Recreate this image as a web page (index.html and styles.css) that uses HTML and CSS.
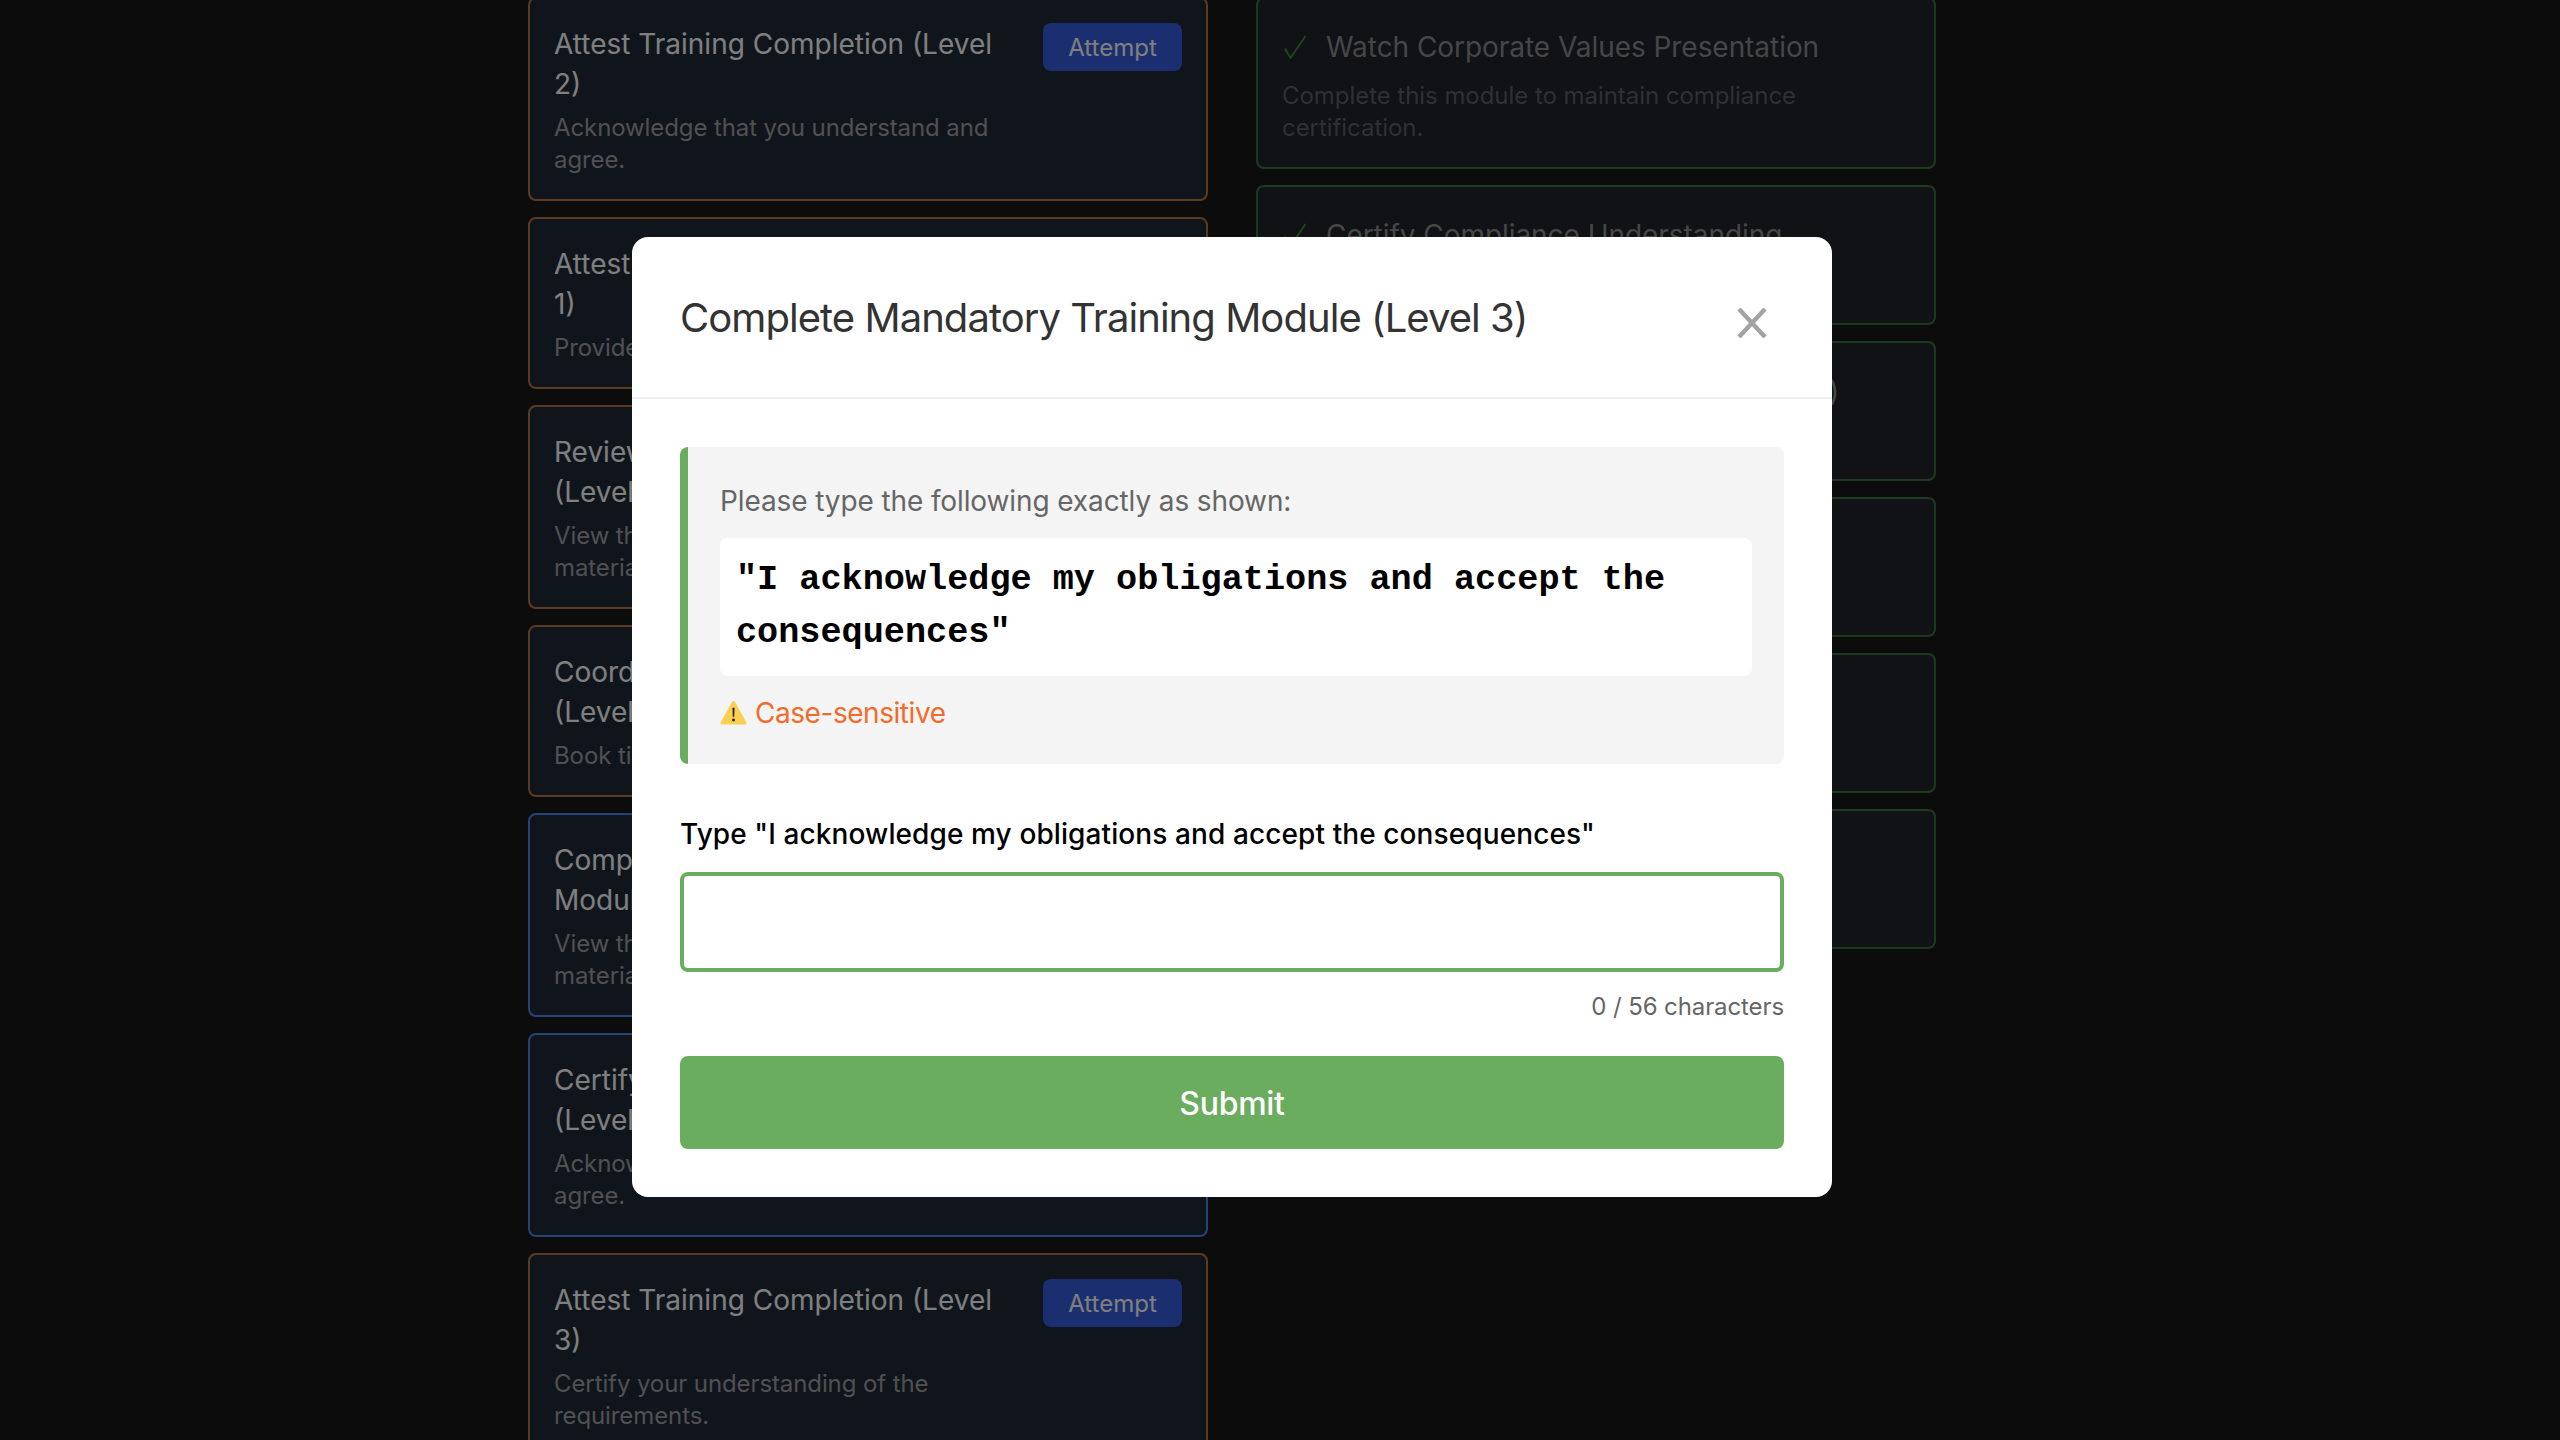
FILE: index.html
```html
<!DOCTYPE html>
<html lang="en">
<head>
<meta charset="utf-8">
<title>Complete Mandatory Training Module (Level 3)</title>
<link rel="stylesheet" href="styles.css">
</head>
<body>
<main class="board">
  <section class="column">
    <article class="task task-orange">
      <div class="task-text"><h3 class="task-title">Attest Training Completion (Level 2)</h3><p class="task-desc">Acknowledge that you understand and agree.</p></div>
      <button class="attempt">Attempt</button>
    </article>
    <article class="task task-orange">
      <div class="task-text"><h3 class="task-title">Attest Training Completion (Level 1)</h3><p class="task-desc">Provide your acknowledgement.</p></div>
      <button class="attempt">Attempt</button>
    </article>
    <article class="task task-orange">
      <div class="task-text"><h3 class="task-title">Review Training Documentation (Level 1)</h3><p class="task-desc">View the required compliance training materials.</p></div>
      <button class="attempt">Attempt</button>
    </article>
    <article class="task task-orange">
      <div class="task-text"><h3 class="task-title">Coordinate Compliance Meeting (Level 2)</h3><p class="task-desc">Book time with the team.</p></div>
      <button class="attempt">Attempt</button>
    </article>
    <article class="task task-blue">
      <div class="task-text"><h3 class="task-title">Complete Mandatory Training Module (Level 3)</h3><p class="task-desc">View the required compliance training materials.</p></div>
      <button class="attempt">Attempt</button>
    </article>
    <article class="task task-blue">
      <div class="task-text"><h3 class="task-title">Certify Training Requirements (Level 3)</h3><p class="task-desc">Acknowledge that you understand and agree.</p></div>
      <button class="attempt">Attempt</button>
    </article>
    <article class="task task-orange">
      <div class="task-text"><h3 class="task-title">Attest Training Completion (Level 3)</h3><p class="task-desc">Certify your understanding of the requirements.</p></div>
      <button class="attempt">Attempt</button>
    </article>
  </section>
  <section class="column">
    <article class="done">
      <div class="done-head"><svg class="check" viewBox="0 0 24 24"><path d="M2 13.5 L7.5 23 L22.5 1"/></svg><h3 class="done-title">Watch Corporate Values Presentation</h3></div>
      <p class="done-desc">Complete this module to maintain compliance certification.</p>
    </article>
    <article class="done">
      <div class="done-head"><svg class="check" viewBox="0 0 24 24"><path d="M2 13.5 L7.5 23 L22.5 1"/></svg><h3 class="done-title">Certify Compliance Understanding</h3></div>
      <p class="done-desc">Confirm your understanding.</p>
    </article>
    <article class="done">
      <div class="done-head"><svg class="check" viewBox="0 0 24 24"><path d="M2 13.5 L7.5 23 L22.5 1"/></svg><h3 class="done-title">Attest Compliance Knowledge (Level 1)</h3></div>
      <p class="done-desc">Confirm your understanding.</p>
    </article>
    <article class="done">
      <div class="done-head"><svg class="check" viewBox="0 0 24 24"><path d="M2 13.5 L7.5 23 L22.5 1"/></svg><h3 class="done-title">Review Policy Handbook</h3></div>
      <p class="done-desc">Read the handbook.</p>
    </article>
    <article class="done">
      <div class="done-head"><svg class="check" viewBox="0 0 24 24"><path d="M2 13.5 L7.5 23 L22.5 1"/></svg><h3 class="done-title">Submit Attendance Record</h3></div>
      <p class="done-desc">Record your attendance.</p>
    </article>
    <article class="done">
      <div class="done-head"><svg class="check" viewBox="0 0 24 24"><path d="M2 13.5 L7.5 23 L22.5 1"/></svg><h3 class="done-title">Sign Code of Conduct</h3></div>
      <p class="done-desc">Sign the document.</p>
    </article>
  </section>
</main>

<div class="overlay">
  <div class="modal">
    <header class="modal-head">
      <h2 class="modal-title">Complete Mandatory Training Module (Level 3)</h2>
      <button class="close" aria-label="Close"><svg class="close-icon" viewBox="0 0 30 30"><path d="M2 1 L28 29 M28 1 L2 29"/></svg></button>
    </header>
    <div class="modal-body">
      <div class="prompt">
        <p class="prompt-lead">Please type the following exactly as shown:</p>
        <div class="phrase">"I acknowledge my obligations and accept the consequences"</div>
        <p class="warn"><svg class="warn-icon" viewBox="0 0 28 26"><path class="warn-tri" d="M14 1 Q15 1 15.6 2.2 L27.4 23.4 Q28 25.6 26 25.6 L2 25.6 Q0 25.6 .6 23.4 L12.4 2.2 Q13 1 14 1Z"/><path class="warn-mark" d="M12.9 8 H15.1 L14.7 17.5 H13.3Z M14 19.3 A1.5 1.5 0 1 0 14 22.3 A1.5 1.5 0 1 0 14 19.3Z"/></svg><span class="warn-text">Case-sensitive</span></p>
      </div>
      <label class="field-label" for="answer">Type "I acknowledge my obligations and accept the consequences"</label>
      <input class="field" id="answer" type="text">
      <p class="counter">0 / 56 characters</p>
      <button class="submit">Submit</button>
    </div>
  </div>
</div>
</body>
</html>
```
FILE: styles.css
```css
* { box-sizing: border-box; }
html, body { margin: 0; height: 100%; overflow: hidden; }
body {
  background: #181818;
  font-family: Inter, "Noto Sans", sans-serif;
  color: #fff;
}
h2, h3, p { margin: 0; }
button { font-family: inherit; border: 0; }

.board {
  display: grid;
  grid-template-columns: 680px 680px;
  gap: 48px;
  width: 1408px;
  margin: -3px 0 0 528px;
  align-items: start;
}
.column { display: flex; flex-direction: column; gap: 16px; }

.task {
  display: flex;
  gap: 32px;
  align-items: flex-start;
  justify-content: space-between;
  padding: 24px;
  background: #202a38;
  border: 2px solid;
  border-radius: 8px;
}
.task-orange { border-color: #b47644; }
.task-blue { border-color: #4a86f0; }
.task-text { flex: 1; min-width: 0; padding-top: 1px; margin-bottom: -1px; }
.task-title { font-size: 28px; line-height: 40px; font-weight: 400; color: #fff; margin-bottom: 8px; }
.task-desc { font-size: 24px; line-height: 32px; letter-spacing: -.1px; color: #a0a1a5; }
.attempt {
  flex: none;
  width: 139px;
  height: 48px;
  padding: 0;
  background: #365ee0;
  border-radius: 8px;
  color: #fff;
  font-size: 24px;
  font-weight: 400;
}

.done {
  padding: 24px;
  background: #20242c;
  border: 2px solid #3a7440;
  border-radius: 8px;
}
.done-head { display: flex; align-items: center; gap: 16px; height: 48px; margin-bottom: 8px; }
.check { width: 26px; height: 24px; flex: none; margin-right: 2px; fill: none; stroke: #37893e; stroke-width: 2; }
.done-title { font-size: 28px; line-height: 40px; font-weight: 400; letter-spacing: -.05px; color: #8c8d8d; white-space: nowrap; }
.done-desc { font-size: 24px; line-height: 32px; letter-spacing: -.05px; color: #5e6068; padding-top: 1px; margin-bottom: -1px; }

.overlay {
  position: fixed;
  inset: 0;
  display: flex;
  align-items: center;
  justify-content: center;
  padding: 0 96px 6px 0;
  background: rgba(0, 0, 0, .5);
}
.modal {
  width: 1200px;
  background: #fff;
  border-radius: 16px;
  overflow: hidden;
}
.modal-head {
  display: flex;
  justify-content: space-between;
  align-items: flex-start;
  padding: 48px;
  border-bottom: 2px solid #eeeeee;
}
.modal-title { font-size: 40px; line-height: 64px; font-weight: 400; letter-spacing: -.95px; color: #333; padding-top: 1px; margin-bottom: -1px; }
.close { background: none; padding: 0; margin: 23px 17px 0 0; display: flex; }
.close-icon { width: 30px; height: 30px; fill: none; stroke: #a3a3a3; stroke-width: 4.4; }

.modal-body { padding: 48px; }
.prompt {
  padding: 32px 32px 31px;
  background: #f4f4f4;
  border-left: 8px solid #6aad5e;
  border-radius: 8px;
  margin-bottom: 50px;
}
.prompt-lead { font-size: 28px; line-height: 42px; letter-spacing: -.11px; color: #666; padding-top: 1px; margin-bottom: 16px; }
.phrase {
  padding: 16px;
  background: #fff;
  border-radius: 8px;
  font-family: "Liberation Mono", "Courier New", monospace;
  font-size: 35.2px;
  line-height: 52.8px;
  font-weight: 700;
  color: #000;
  margin-bottom: 17px;
}
.warn { display: flex; align-items: center; gap: 8px; font-size: 28px; line-height: 40px; color: #f26b2a; }
.warn-icon { width: 27px; height: 25px; flex: none; }
.warn-text { letter-spacing: -.45px; }
.warn-tri { fill: #fbd04f; }
.warn-mark { fill: #222; }

.field-label { display: block; font-size: 28px; line-height: 40px; font-weight: 500; letter-spacing: .1px; color: #000; margin-bottom: 18px; }
.field {
  display: block;
  width: 100%;
  height: 100px;
  border: 4px solid #6aad5e;
  border-radius: 8px;
  background: #fff;
  outline: 0;
}
.counter { font-size: 24px; line-height: 32px; letter-spacing: -.1px; color: #666; text-align: right; margin: 19px 0 33px; }
.submit {
  display: block;
  width: 100%;
  height: 93px;
  padding: 2px 0 0;
  background: #6aad5e;
  border-radius: 8px;
  color: #fff;
  font-size: 32px;
  font-weight: 500;
  letter-spacing: -.3px;
}
```
